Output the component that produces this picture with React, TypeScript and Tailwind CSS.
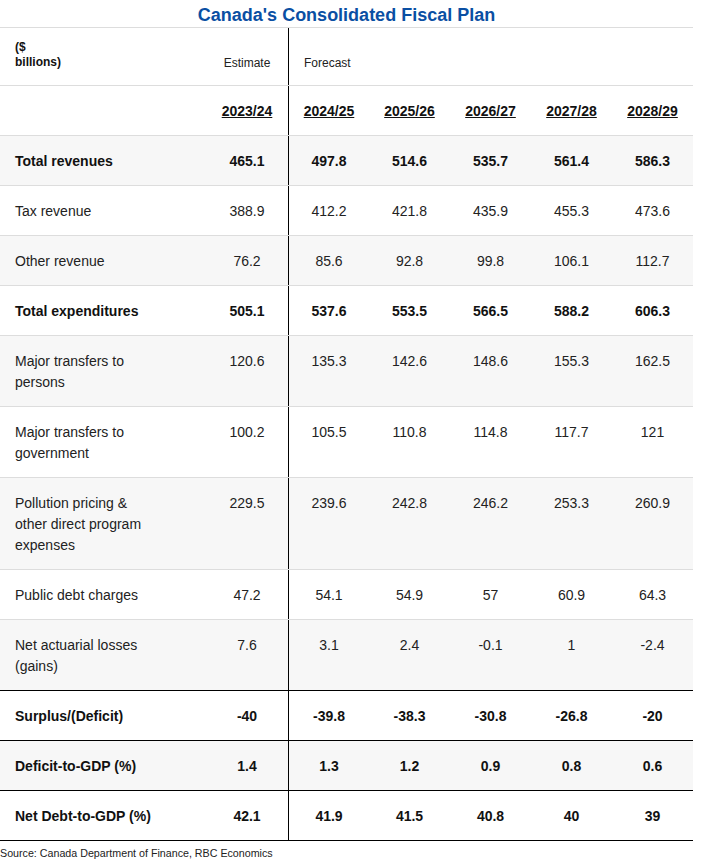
import React from "react";

type Row = {
  label: string;
  values: (string | number)[];
  bold?: boolean;
  shade?: boolean;
  line?: "gray" | "black";
};

const rows: Row[] = [
  { label: "Total revenues", values: ["465.1", "497.8", "514.6", "535.7", "561.4", "586.3"], bold: true, shade: true },
  { label: "Tax revenue", values: ["388.9", "412.2", "421.8", "435.9", "455.3", "473.6"] },
  { label: "Other revenue", values: ["76.2", "85.6", "92.8", "99.8", "106.1", "112.7"], shade: true },
  { label: "Total expenditures", values: ["505.1", "537.6", "553.5", "566.5", "588.2", "606.3"], bold: true },
  { label: "Major transfers to persons", values: ["120.6", "135.3", "142.6", "148.6", "155.3", "162.5"], shade: true },
  { label: "Major transfers to government", values: ["100.2", "105.5", "110.8", "114.8", "117.7", "121"] },
  { label: "Pollution pricing & other direct program expenses", values: ["229.5", "239.6", "242.8", "246.2", "253.3", "260.9"], shade: true },
  { label: "Public debt charges", values: ["47.2", "54.1", "54.9", "57", "60.9", "64.3"] },
  { label: "Net actuarial losses (gains)", values: ["7.6", "3.1", "2.4", "-0.1", "1", "-2.4"], shade: true, line: "black" },
  { label: "Surplus/(Deficit)", values: ["-40", "-39.8", "-38.3", "-30.8", "-26.8", "-20"], bold: true, line: "black" },
  { label: "Deficit-to-GDP (%)", values: ["1.4", "1.3", "1.2", "0.9", "0.8", "0.6"], bold: true, shade: true, line: "black" },
  { label: "Net Debt-to-GDP (%)", values: ["42.1", "41.9", "41.5", "40.8", "40", "39"], bold: true, line: "black" },
];

const years = ["2023/24", "2024/25", "2025/26", "2026/27", "2027/28", "2028/29"];

const grid = "grid grid-cols-[206px_82px_81px_81px_81px_81px_81px]";

export default function App() {
  return (
    <div className="w-[704px] bg-white text-[#222] font-['Liberation_Sans',Arial,sans-serif]">
      <div className="w-[693px]">
        <h1 className="h-[27px] pt-[5px] text-center text-[18px] leading-[21px] font-bold text-[#0a4fa3]">
          Canada's Consolidated Fiscal Plan
        </h1>

        <div className="border-t border-[#dddddd]">
          {/* header: units / estimate / forecast */}
          <div className={`${grid} border-b border-[#dddddd] text-[12px] leading-[15px]`}>
            <div className="pl-[15px] pt-[12px] pb-[15px] font-bold text-[#111]">
              ($
              <br />
              billions)
            </div>
            <div className="flex items-end justify-center pb-[14px]">Estimate</div>
            <div className="col-span-5 flex items-end border-l border-black pl-[15px] pb-[14px]">
              Forecast
            </div>
          </div>

          {/* header: years */}
          <div className={`${grid} border-b border-[#dddddd] text-[14px] leading-[21px] font-bold text-[#111]`}>
            <div className="pt-[15px] pb-[13px]" />
            {years.map((y, i) => (
              <div
                key={y}
                className={`pt-[15px] pb-[13px] text-center underline ${i === 1 ? "border-l border-black" : ""}`}>
                {y}
              </div>
            ))}
          </div>

          {rows.map((r) => (
            <div
              key={r.label}
              className={`${grid} border-b text-[14px] leading-[21px] ${
                r.line === "black" ? "border-black" : "border-[#dddddd]"
              } ${r.shade ? "bg-[#f7f7f7]" : "bg-white"} ${r.bold ? "font-bold text-[#111]" : ""}`}>
              <div className="pl-[15px] pr-[51px] pt-[15px] pb-[13px]">{r.label}</div>
              {r.values.map((v, i) => (
                <div
                  key={i}
                  className={`pt-[15px] pb-[13px] text-center ${i === 1 ? "border-l border-black" : ""}`}>
                  {v}
                </div>
              ))}
            </div>
          ))}
        </div>

        <div className="h-[2px] w-[693px]" />
        <p className="mt-[3px] text-[10.7px] leading-[14px] text-[#222]">
          Source: Canada Department of Finance, RBC Economics
        </p>
      </div>
    </div>
  );
}
